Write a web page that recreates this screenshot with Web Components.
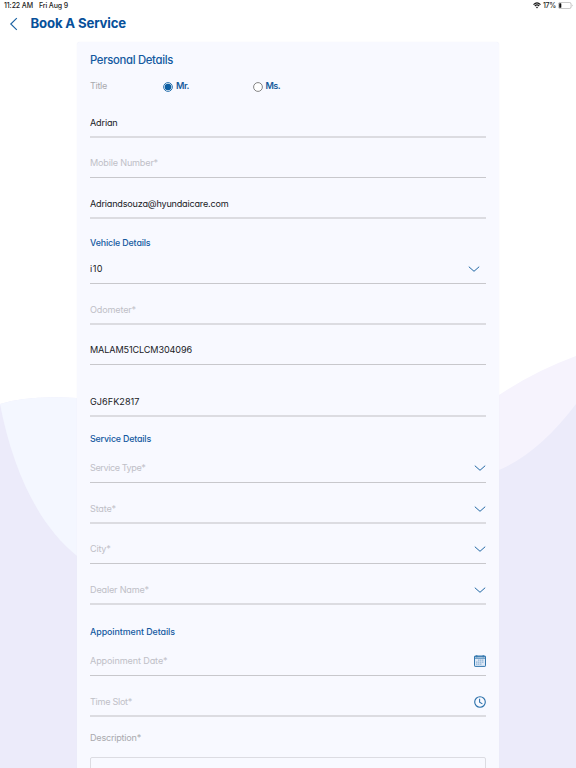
<!DOCTYPE html>
<html lang="en">
<head>
<meta charset="utf-8">
<title>Book A Service</title>
<style>
  body {
    margin: 0;
    width: 576px;
    height: 768px;
    overflow: hidden;
    background: #fff;
    font-family: Inter, "Liberation Sans", sans-serif;
    font-feature-settings: "cv11";
    color: #202126;
  }
</style>
</head>
<body>
<service-page>
  <status-bar slot="status"></status-bar>
  <page-header slot="header"><fit-text width="95.5">Book A Service</fit-text></page-header>

  <section-title size="large" style="--h:35px"><fit-text width="83">Personal Details</fit-text></section-title>
  <title-choice></title-choice>
  <form-field style="--h:42px" line="soft"><fit-text width="27.5">Adrian</fit-text></form-field>
  <form-field style="--h:40px" empty><fit-text width="68">Mobile Number*</fit-text></form-field>
  <form-field style="--h:41px" line="soft"><fit-text width="138.5">Adriandsouza@hyundaicare.com</fit-text></form-field>

  <section-title style="--h:49px"><fit-text width="60.5">Vehicle Details</fit-text></section-title>
  <form-field style="--h:16px" icon="chevron" inset><fit-text width="13">i10</fit-text></form-field>
  <form-field style="--h:41px" line="soft" empty><fit-text width="46">Odometer*</fit-text></form-field>
  <form-field style="--h:40px"><fit-text width="102">MALAM51CLCM304096</fit-text></form-field>
  <form-field style="--h:52px" line="soft"><fit-text width="49.5">GJ6FK2817</fit-text></form-field>

  <section-title style="--h:44px"><fit-text width="61">Service Details</fit-text></section-title>
  <form-field style="--h:22px" icon="chevron" empty><fit-text width="55.5">Service Type*</fit-text></form-field>
  <form-field style="--h:41px" line="soft" icon="chevron" empty><fit-text width="26">State*</fit-text></form-field>
  <form-field style="--h:40px" icon="chevron" empty><fit-text width="20.5">City*</fit-text></form-field>
  <form-field style="--h:41px" line="soft" icon="chevron" empty><fit-text width="59">Dealer Name*</fit-text></form-field>

  <section-title style="--h:55px"><fit-text width="85">Appointment Details</fit-text></section-title>
  <form-field style="--h:16px" icon="calendar" empty><fit-text width="77.5">Appoinment Date*</fit-text></form-field>
  <form-field style="--h:41px" line="soft" icon="clock" empty><fit-text width="42">Time Slot*</fit-text></form-field>
  <description-box><fit-text width="51">Description*</fit-text></description-box>
</service-page>

<script>
const icons = {
  chevron: `<svg width="12" height="8" viewBox="0 0 12 8"><path d="M.8 1.7 6 6.3 11.2 1.7" fill="none" stroke="#2067a4" stroke-width="1"/></svg>`,
  calendar: `<svg width="12" height="12" viewBox="0 0 12 12" fill="none" stroke="#3377ae">
    <rect x=".5" y="1" width="11" height="10.4" rx=".6" fill="#dfe9f6"/>
    <path d="M.5 1.6h11M.5 3.2h11" stroke-width=".9"/>
    <path d="M2.8 0v2.4M9.2 0v2.4" stroke-width=".9"/>
    <path d="M4 5.2h6M2 7.2h8M2 9.2h6" stroke="#8fb4d6" stroke-width="1.2" stroke-dasharray="1.4 .5"/></svg>`,
  clock: `<svg width="12" height="12" viewBox="0 0 12 12" fill="none" stroke="#2a70aa">
    <circle cx="6" cy="6" r="5.3" stroke-width="1.1"/><path d="M5.6 2.7v3.5l2.8 1.7" stroke-width="1.05"/></svg>`
};

function define(name, html, setup) {
  const template = document.createElement("template");
  template.innerHTML = html;
  customElements.define(name, class extends HTMLElement {
    constructor() {
      super();
      this.attachShadow({ mode: "open" }).appendChild(template.content.cloneNode(true));
    }
    connectedCallback() {
      if (setup) setup(this, this.shadowRoot);
    }
  });
}

define("service-page", `
<style>
  :host { display: flex; flex-direction: column; position: relative; width: 576px; height: 768px; overflow: hidden; }
  .backdrop { position: absolute; inset: 0; z-index: -1; }
  main {
    box-sizing: border-box;
    flex: 1;
    min-height: 0;
    margin: 0 77px;
    width: 422px;
    padding: 0 13px;
    background: #f8f9ff;
    border-radius: 3px 3px 0 0;
    box-shadow: 0 0 1px #e9e9f4;
  }
</style>
<svg class="backdrop" width="576" height="768" viewBox="0 0 576 768">
  <path d="M0 404Q28 395 77 398V768H0Z" fill="#ecebfa"/>
  <path d="M0 404Q28 395 77 398V556C36 523 12 466 0 404Z" fill="#f4f7ff"/>
  <path d="M499 395Q535 371 576 356V768H499Z" fill="#f6f3fd"/>
  <path d="M499 470Q539 453 576 404V768H499Z" fill="#ecebfa"/>
</svg>
<slot name="status"></slot>
<slot name="header"></slot>
<main><slot></slot></main>`);

define("status-bar", `
<style>
  :host { display: flex; align-items: center; height: 12px; padding: 0 3px 0 4px; font-size: 7px; font-weight: 500; font-feature-settings: normal; color: #222; }
  .date { margin-left: 6px; }
  .right { display: flex; align-items: center; gap: 2px; margin-left: auto; }
</style>
<fit-text width="29">11:22 AM</fit-text>
<fit-text class="date" width="29">Fri Aug 9</fit-text>
<div class="right">
  <svg width="8" height="7" viewBox="0 0 8 7" fill="none" stroke="#151515">
    <path d="M.5 2.6Q4-.8 7.5 2.6M1.8 4Q4 1.9 6.2 4" stroke-width="1.15"/>
    <path d="m2.9 5.1Q4 4.2 5.1 5.1L4 6.4Z" fill="#151515" stroke="none"/>
  </svg>
  <fit-text width="13">17%</fit-text>
  <svg width="15" height="7" viewBox="0 0 15 7">
    <rect x=".4" y=".4" width="12.7" height="6.2" rx="1.8" fill="#fff" stroke="#aaa" stroke-width=".7"/>
    <rect x="1.2" y="1.2" width="2.1" height="4.6" rx=".6" fill="#111"/>
    <path d="M14 2.4q1 1.1 0 2.2Z" fill="#999"/>
  </svg>
</div>`);

define("page-header", `
<style>
  :host { display: flex; align-items: center; box-sizing: border-box; height: 30px; padding: 0 0 7px 9px; gap: 12.5px; color: #07509a; font-size: 13.2px; font-weight: 750; }
</style>
<svg width="9" height="14" viewBox="0 0 9 14"><path d="M7.8 1.2 1.8 7l6 5.8" fill="none" stroke="#1b62a3" stroke-width="1.15"/></svg>
<slot></slot>`);

define("section-title", `
<style>
  :host { display: flex; align-items: center; box-sizing: border-box; height: var(--h); color: #145a9f; font-size: 8.9px; font-weight: 500; }
  :host([size]) { padding-top: 2px; font-size: 11.3px; font-weight: 450; }
</style>
<slot></slot>`);

define("title-choice", `
<style>
  :host { display: grid; grid-template-columns: 73px 89.5px auto; align-items: center; justify-items: start; box-sizing: border-box; height: 19px; font-size: 9.1px; color: #a9a9ae; }
  label { display: flex; align-items: center; gap: 3px; color: #175b9c; font-weight: 600; }
</style>
<fit-text width="17">Title</fit-text>
<label>
  <svg width="10" height="10" viewBox="0 0 10 10"><circle cx="5" cy="5" r="4.4" fill="#fff" stroke="#1765a7" stroke-width=".9"/><circle cx="5" cy="5" r="3.3" fill="#0d5fa3"/></svg>
  <fit-text width="13">Mr.</fit-text>
</label>
<label>
  <svg width="10" height="10" viewBox="0 0 10 10"><circle cx="5" cy="5" r="4.4" fill="#fff" stroke="#777" stroke-width=".9"/></svg>
  <fit-text width="14.5">Ms.</fit-text>
</label>`);

define("form-field", `
<style>
  :host { display: flex; align-items: flex-end; justify-content: space-between; box-sizing: border-box; height: var(--h); border-bottom: 1px solid #c8c8cc; font-size: 9.1px; color: #202126; }
  :host([line="soft"]) { border-bottom: 2px solid #dcdce1; }
  :host([empty]) { color: #bfc0c7; }
  .value { display: flex; align-items: center; height: 28px; }
  :host([line="soft"]) .value { height: 26px; }
  .icon { display: flex; align-items: center; height: 28px; }
  :host([line="soft"]) .icon { height: 26px; }
  :host([inset]) .icon { margin-right: 6px; }
</style>
<div class="value"><slot></slot></div>
<div class="icon"></div>`, (el, root) => {
  root.querySelector(".icon").innerHTML = icons[el.getAttribute("icon")] || "";
});

define("description-box", `
<style>
  :host { display: block; font-size: 9.1px; color: #a9a9ae; }
  .label { display: flex; align-items: center; box-sizing: border-box; height: 40px; padding-top: 2px; }
  .box { box-sizing: border-box; height: 60px; border: 1px solid #dcdce2; border-radius: 2px; }
</style>
<div class="label"><slot></slot></div>
<div class="box"></div>`);

// defined last: it measures itself, so its hosts must have their styles by now
define("fit-text", `
<style>
  :host { display: inline-block; white-space: nowrap; line-height: 1.2; }
</style>
<slot></slot>`, el => {
  const target = Number(el.getAttribute("width"));
  const natural = el.getBoundingClientRect().width;
  const count = el.textContent.length;
  if (natural) el.style.letterSpacing = (target - natural) / count + "px";
});
</script>
</body>
</html>
